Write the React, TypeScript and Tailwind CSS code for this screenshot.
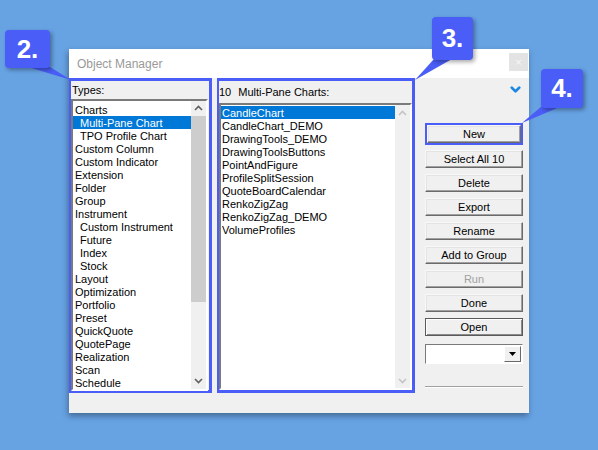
import { ChevronDown } from 'lucide-react'

// --- Data ---

const TYPES: { label: string; indent?: boolean; selected?: boolean }[] = [
  { label: 'Charts' },
  { label: 'Multi-Pane Chart', indent: true, selected: true },
  { label: 'TPO Profile Chart', indent: true },
  { label: 'Custom Column' },
  { label: 'Custom Indicator' },
  { label: 'Extension' },
  { label: 'Folder' },
  { label: 'Group' },
  { label: 'Instrument' },
  { label: 'Custom Instrument', indent: true },
  { label: 'Future', indent: true },
  { label: 'Index', indent: true },
  { label: 'Stock', indent: true },
  { label: 'Layout' },
  { label: 'Optimization' },
  { label: 'Portfolio' },
  { label: 'Preset' },
  { label: 'QuickQuote' },
  { label: 'QuotePage' },
  { label: 'Realization' },
  { label: 'Scan' },
  { label: 'Schedule' },
]

const CHARTS = [
  'CandleChart',
  'CandleChart_DEMO',
  'DrawingTools_DEMO',
  'DrawingToolsButtons',
  'PointAndFigure',
  'ProfileSplitSession',
  'QuoteBoardCalendar',
  'RenkoZigZag',
  'RenkoZigZag_DEMO',
  'VolumeProfiles',
]

// --- Bits ---

function Caret({ up, disabled }: { up?: boolean; disabled?: boolean }) {
  return (
    <svg width="9" height="6" viewBox="0 0 9 6" className={up ? '' : 'rotate-180'}>
      <polyline
        points="1,5 4.5,1.5 8,5"
        fill="none"
        stroke={disabled ? '#c4c4c4' : '#606060'}
        strokeWidth="1.6"
      />
    </svg>
  )
}

function Scrollbar({ thumb }: { thumb?: boolean }) {
  return (
    <div className="flex h-full w-[15px] shrink-0 flex-col bg-[#f0f0f0]">
      <div className="flex h-[15px] items-center justify-center">
        <Caret up disabled={!thumb} />
      </div>
      <div className="flex-1">
        {thumb && <div className="h-[186px] w-full bg-[#cdcdcd]" />}
      </div>
      <div className="flex h-[15px] items-center justify-center">
        <Caret disabled={!thumb} />
      </div>
    </div>
  )
}

function WinButton({ label, disabled, primary }: { label: string; disabled?: boolean; primary?: boolean }) {
  return (
    <div
      className={`flex h-[18px] items-center justify-center border bg-[#f0f0f0] pt-[1px] text-[11px] leading-none ${
        primary
          ? 'border-[#5a5a5a] shadow-[inset_1px_1px_0_#fff,inset_-1px_-1px_0_#8a8a8a]'
          : 'border-t-[#f8f8f8] border-l-[#f8f8f8] border-b-[#6a6a6a] border-r-[#6a6a6a] shadow-[inset_-1px_-1px_0_#a0a0a0,inset_1px_1px_0_#e3e3e3]'
      } ${disabled ? 'text-[#a0a0a0]' : 'text-black'}`}
    >
      {label}
    </div>
  )
}

function Badge({ n, className }: { n: string; className: string }) {
  return (
    <div
      className={`absolute flex items-center justify-center rounded-[4px] bg-[#4a5df6] text-[26px] font-bold text-white shadow-[2px_2px_4px_rgba(0,0,0,0.35)] ${className}`}
    >
      {n}
    </div>
  )
}

// --- Main ---

export default function App() {
  return (
    <div
      className="relative h-[450px] w-[598px] overflow-hidden bg-[#67a2e3]"
      style={{ fontFamily: '"Liberation Sans", Arial, sans-serif' }}
    >
      {/* dialog window */}
      <div className="absolute top-[49px] left-[69px] flex h-[364px] w-[460px] flex-col bg-[#f0f0f0] shadow-[-1px_3px_6px_rgba(0,0,0,0.35)]">
        <div className="flex h-[29px] shrink-0 items-center justify-between bg-white pl-[8px] pr-[1px]">
          <span className="text-[12px] text-[#999999]">Object Manager</span>
          <div className="mb-[3px] flex h-[18px] w-[19px] items-center justify-center bg-[#e3e3e3] text-[11px] text-[#f8f8f8]">
            ×
          </div>
        </div>

        <div className="flex flex-1">
          {/* Types pane */}
          <div className="flex h-[315px] w-[143px] flex-col border-[3px] border-[#4a5df6] border-l-2">
            <div className="flex h-[22px] items-center pl-[1px] pt-[1px] text-[11px] text-black">Types:</div>
            <div className="mr-[1px] flex flex-1 border-2 border-t-[#7a7a7a] border-l-[#7a7a7a] border-b-white border-r-white bg-white">
              <div className="flex-1 pt-[2px]">
                {TYPES.map((t) => (
                  <div
                    key={t.label}
                    className={`h-[13px] text-[11px] leading-[14px] ${t.indent ? 'pl-[7px]' : 'pl-[2px]'} ${
                      t.selected ? 'bg-[#0078d7] text-white' : 'text-black'
                    }`}
                  >
                    {t.label}
                  </div>
                ))}
              </div>
              <Scrollbar thumb />
            </div>
          </div>

          {/* Charts pane */}
          <div className="ml-[5px] flex h-[315px] w-[198px] flex-col border-[3px] border-[#4a5df6] border-l-2">
            <div className="flex h-[22px] items-center pt-[1px] text-[11px] text-black">
              <span>10</span>
              <span className="ml-[7px]">Multi-Pane Charts:</span>
            </div>
            <div className="flex flex-1 border-2 border-t-[#7a7a7a] border-l-[#7a7a7a] border-b-white border-r-white bg-white">
              <div className="flex-1 pt-[1px]">
                {CHARTS.map((c, i) => (
                  <div
                    key={c}
                    className={`h-[13px] pl-[1px] text-[11px] leading-[14px] ${
                      i === 0 ? 'bg-[#0078d7] text-white' : 'text-black'
                    }`}
                  >
                    {c}
                  </div>
                ))}
              </div>
              <Scrollbar />
            </div>
          </div>

          {/* Buttons */}
          <div className="ml-[10px] flex w-[98px] flex-col pt-[4px]">
            <div className="flex justify-end">
              <ChevronDown size={15} strokeWidth={4.5} className="text-[#1a87e0]" />
            </div>
            <div className="mt-[26px] border-2 border-[#4a5df6]">
              <WinButton label="New" />
            </div>
            <div className="mt-[5px] flex flex-col gap-[6px]">
              <WinButton label="Select All 10" />
              <WinButton label="Delete" />
              <WinButton label="Export" />
              <WinButton label="Rename" />
              <WinButton label="Add to Group" />
              <WinButton label="Run" disabled />
              <WinButton label="Done" />
              <WinButton label="Open" primary />
            </div>
            <div className="mt-[8px] flex h-[20px] border border-t-[#7a7a7a] border-l-[#7a7a7a] border-b-white border-r-white bg-white">
              <div className="flex-1" />
              <div className="mt-[1px] mr-[1px] flex h-[16px] w-[17px] items-center justify-center border border-t-white border-l-white border-b-[#6a6a6a] border-r-[#6a6a6a] bg-[#f0f0f0]">
                <svg width="7" height="4" viewBox="0 0 7 4">
                  <polygon points="0,0 7,0 3.5,4" fill="#000" />
                </svg>
              </div>
            </div>
            <div className="mt-[22px] h-[2px] border-t border-b border-t-[#a0a0a0] border-b-white" />
          </div>
        </div>
      </div>

      {/* callout tails */}
      <svg className="absolute inset-0" width="598" height="450" viewBox="0 0 598 450">
        <polygon points="28,67 50,67 71,80" fill="#4a5df6" />
        <polygon points="434,59 452,59 415,80" fill="#4a5df6" />
        <polygon points="542,106 562,106 522,123" fill="#4a5df6" />
      </svg>

      <Badge n="2." className="top-[30px] left-[5px] h-[38px] w-[45px]" />
      <Badge n="3." className="top-[17px] left-[432px] h-[43px] w-[41px]" />
      <Badge n="4." className="top-[69px] left-[541px] h-[39px] w-[42px]" />
    </div>
  )
}
